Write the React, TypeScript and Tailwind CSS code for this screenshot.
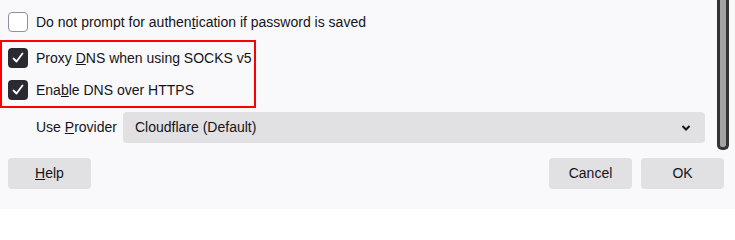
import React from 'react';

const Check = ({ checked }: { checked: boolean }) => (
  <span
    className={`flex h-5 w-5 shrink-0 items-center justify-center rounded-[4px] ${
      checked ? 'bg-[#2b2a33]' : 'border border-[#8f8f9d] bg-white'
    }`}
  >
    {checked && (
      <svg width="14" height="14" viewBox="0 0 14 14" fill="none">
        <path d="M2.5 7.5 L5.5 10.5 L11.5 2.5" stroke="white" strokeWidth="1.8" strokeLinecap="round" strokeLinejoin="round" />
      </svg>
    )}
  </span>
);

const Row = ({ checked, children }: { checked: boolean; children: React.ReactNode }) => (
  <div className="flex h-8 items-center gap-2 whitespace-nowrap">
    <Check checked={checked} />
    <span>{children}</span>
  </div>
);

const Btn = ({ children }: { children: React.ReactNode }) => (
  <button className="h-[31px] w-[83px] rounded-[4px] bg-[#e1e1e3] text-[#15141a]">{children}</button>
);

export default function App() {
  return (
    <div
      className="h-[209px] w-[735px] bg-[#f9f9fb] text-[14px] text-[#15141a]"
      style={{ fontFamily: '"Liberation Sans", Arial, sans-serif' }}
    >
      <div className="flex h-[150px]">
        <div className="w-[717px]">
          <div className="pl-2 pt-[6px]">
            <Row checked={false}>
              Do not prompt for authen<u>t</u>ication if password is saved
            </Row>
          </div>
          <div className="mt-[2px] w-[256px] border-2 border-[#ff0000] pl-[6px]">
            <Row checked>
              Proxy <u>D</u>NS when using SOCKS v5
            </Row>
            <Row checked>
              Ena<u>b</u>le DNS over HTTPS
            </Row>
          </div>
          <div className="mt-1 flex items-center pl-9 whitespace-nowrap">
            <span className="w-[87px]">
              Use <u>P</u>rovider
            </span>
            <div className="flex h-[31px] w-[582px] items-center justify-between rounded-[4px] bg-[#e1e1e3] pl-[12px] pr-[14px]">
              <span>Cloudflare (Default)</span>
              <svg width="10" height="8" viewBox="0 0 10 8">
                <path d="M1.5 2 L5 5.5 L8.5 2" stroke="#15141a" strokeWidth="2" fill="none" />
              </svg>
            </div>
          </div>
        </div>
        <div className="h-[150px] w-3 rounded-b-[5px] border-x-[3px] border-b-[3px] border-[#333333] bg-[#a3a3a3]" />
      </div>
      <div className="flex items-center justify-between pl-2 pr-[11px] pt-2">
        <Btn>
          <u>H</u>elp
        </Btn>
        <div className="flex gap-[9px]">
          <Btn>Cancel</Btn>
          <Btn>OK</Btn>
        </div>
      </div>
    </div>
  );
}
